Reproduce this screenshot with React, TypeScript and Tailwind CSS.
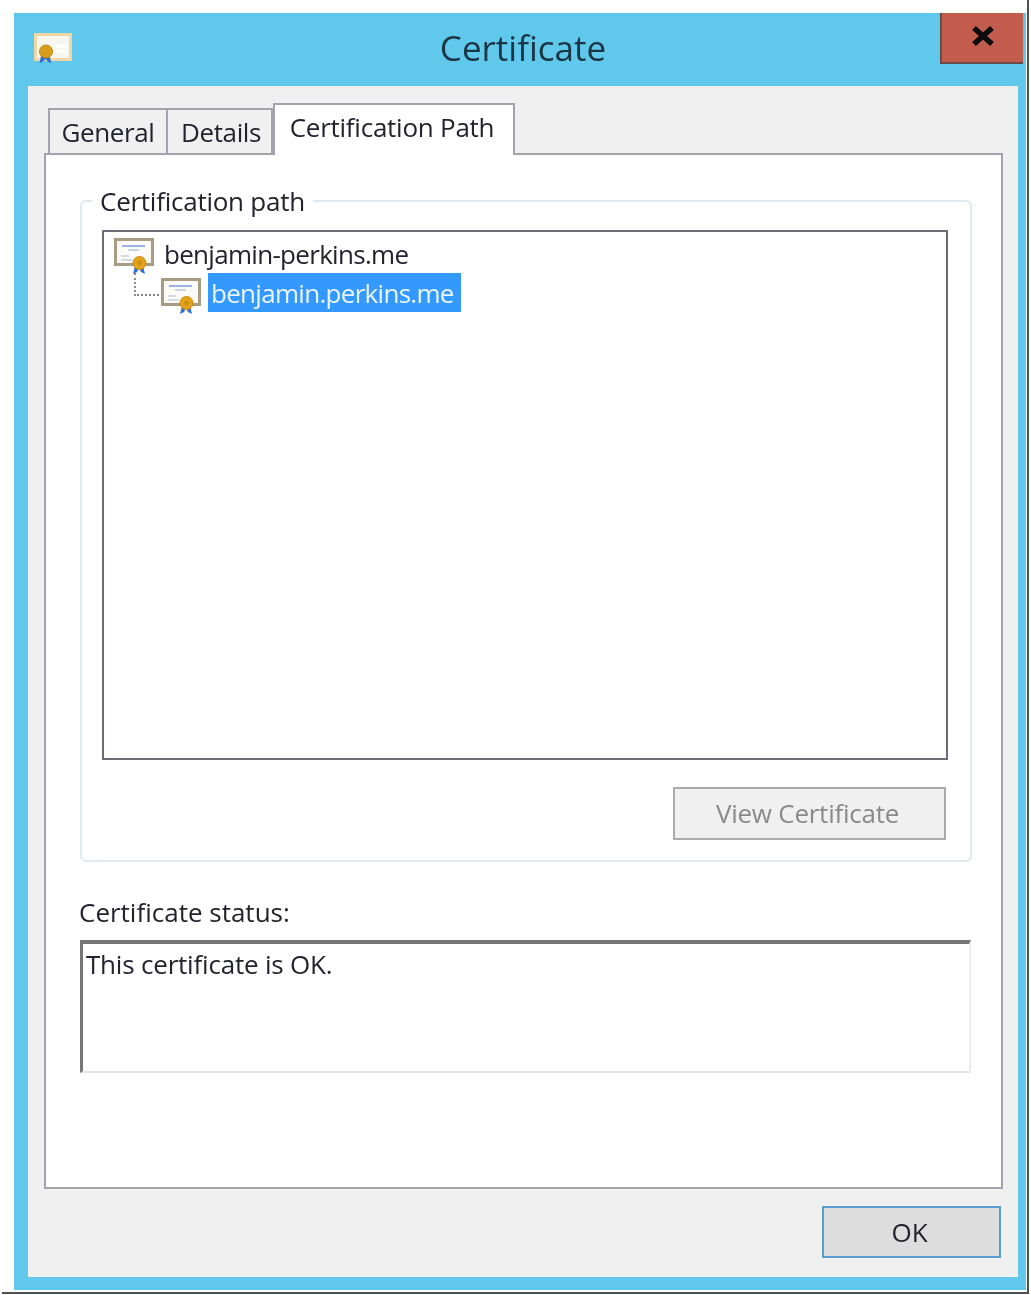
import React from "react";

const font = "font-['Open_Sans',sans-serif]";

const CertIcon: React.FC = () => (
    <svg width="42" height="38" viewBox="0 0 42 38" className="shrink-0">
        <rect x="1.5" y="1.5" width="37" height="25" fill="#fbfaf6" stroke="#a89c84" strokeWidth="3" />
        <path d="M8 8h23" stroke="#9db2e0" strokeWidth="2" />
        <path d="M14 12h11" stroke="#b9c6e0" strokeWidth="1.5" />
        <path d="M7 18h8M7 22h11" stroke="#c6cfe2" strokeWidth="1.5" />
        <path d="M21 28l-2 8 4-2 2-4 2 4 4 2-2-8z" fill="#2f6fd8" />
        <circle cx="25.5" cy="25" r="6.5" fill="#e3a41c" stroke="#c98a10" />
        <circle cx="25.5" cy="25" r="2.5" fill="#cf9214" />
    </svg>
);

const TitleIcon: React.FC = () => (
    <svg width="40" height="32" viewBox="0 0 40 32" className="shrink-0">
        <rect x="1.5" y="1.5" width="35" height="25" fill="#f6f6ef" stroke="#f3d6a6" strokeWidth="3" />
        <path d="M22 13h11M22 18h11" stroke="#ffffff" strokeWidth="3" />
        <path d="M7 23l-1.5 7 3-1 3-3 3 3 3 1-2-7z" fill="#2f6fd8" />
        <circle cx="12" cy="18.5" r="6.5" fill="#d89c1a" stroke="#b98810" />
    </svg>
);

const App: React.FC = () => {
    return (
        <div className={`${font} ml-[2px] h-[1294px] w-[1027px] overflow-hidden border-r-2 border-b-2 border-[#505050] bg-white pt-[13px] pl-[12px] text-[#23232e] blur-[0.7px]`}>
            <div className="relative flex h-[1277px] w-[1012px] flex-col bg-[#5fc8eb] pr-[8px] pb-[13px] pl-[14px]">
                {/* title bar */}
                <div className="flex h-[73px] shrink-0 items-center justify-center">
                    <div className="absolute top-[20px] left-[20px]">
                        <TitleIcon />
                    </div>
                    <span className="mb-[4px] text-[35px] leading-none text-[#1c3545]">Certificate</span>
                    <div className="absolute top-0 right-[3px] flex h-[51px] w-[83px] items-center justify-center border-b-2 border-l-2 border-[#6b4a48] bg-[#c25c4d] pb-[3px]">
                        <svg width="24" height="22" viewBox="0 0 24 22">
                            <path d="M3 3l18 16M21 3L3 19" stroke="#0c0c0c" strokeWidth="5.5" />
                        </svg>
                    </div>
                </div>

                {/* dialog body */}
                <div className="flex min-h-0 flex-1 flex-col bg-[#f0f0f0] pt-[17px] pr-[15px] pb-[19px] pl-[16px]">
                    <div className="relative z-10 -mb-[2px] flex h-[52px] shrink-0 items-end pl-[4px]">
                        <div className="flex h-[47px] w-[120px] items-center justify-center border-2 border-[#a3a3ad] bg-[#f0f0f0] text-[26px] leading-none tracking-[-0.4px]">
                            General
                        </div>
                        <div className="flex h-[47px] w-[105px] items-center justify-center border-t-2 border-r-2 border-b-2 border-[#a3a3ad] bg-[#f0f0f0] pl-[3px] text-[26px] leading-none tracking-[-0.4px]">
                            Details
                        </div>
                        <div className="flex h-[52px] w-[242px] items-center justify-center border-x-2 border-t-2 border-[#a3a3ad] bg-white pr-[4px] pb-[7px] text-[26px] leading-none tracking-[-0.25px]">
                            Certification Path
                        </div>
                    </div>

                    <div className="flex min-h-0 flex-1 flex-col border-2 border-[#a3a3ad] bg-white px-[34px] pt-[45px]">
                        {/* certification path group */}
                        <div className="relative flex h-[662px] w-[892px] shrink-0 flex-col items-end rounded-[6px] border-2 border-[#dfe9f0] pt-[28px] pr-[22px] pb-[20px] pl-[20px]">
                            <span className="absolute -top-[15px] left-[10px] bg-white px-[8px] text-[26px] leading-[28px] tracking-[-0.25px]">
                                Certification path
                            </span>
                            <div className="flex h-[530px] w-[846px] shrink-0 flex-col border-2 border-[#6e6e78] bg-white pt-[5px] pl-[10px]">
                                <div className="flex h-[36px] shrink-0 items-center gap-[8px]">
                                    <div className="mt-[4px]">
                                        <CertIcon />
                                    </div>
                                    <span className="pb-[2px] text-[26px] leading-none tracking-[-0.7px]">benjamin-perkins.me</span>
                                </div>
                                <div className="relative flex h-[40px] shrink-0 items-start pl-[47px]">
                                    <div className="absolute top-[0px] left-[20px] h-[23px] w-[25px] border-b-2 border-l-2 border-dotted border-[#8a8a8a]" />
                                    <div className="mt-[5px]">
                                        <CertIcon />
                                    </div>
                                    <span className="ml-[5px] flex h-[39px] w-[253px] items-center bg-[#3399ff] pl-[3px] text-[26px] leading-none tracking-[-0.7px] text-[#eaf4ff]">
                                        benjamin.perkins.me
                                    </span>
                                </div>
                            </div>
                            <button className="mt-[27px] mr-[2px] flex h-[54px] w-[273px] items-center justify-center border-2 border-[#ababab] bg-[#f0f0f0] pr-[4px] pb-[2px] text-[26px] leading-none tracking-[-0.25px] text-[#8a8a8a]">
                                View Certificate
                            </button>
                        </div>

                        {/* status */}
                        <div className="mt-[34px] -ml-[1px] h-[32px] text-[26px] leading-[32px]">Certificate status:</div>
                        <div className="mt-[12px] h-[133px] w-[891px] border-t-4 border-r-2 border-b-2 border-l-[3px] border-t-[#777] border-r-[#ececec] border-b-[#e4e4e4] border-l-[#777] pt-[4px] pl-[3px] text-[26px] leading-[32px] tracking-[-0.2px]">
                            This certificate is OK.
                        </div>
                    </div>

                    {/* footer */}
                    <div className="flex h-[69px] shrink-0 items-end justify-end pr-[2px]">
                        <button className="flex h-[52px] w-[179px] items-center justify-center border-2 border-[#5a9ccb] bg-[#dddddd] pr-[4px] text-[26px] leading-none">
                            OK
                        </button>
                    </div>
                </div>
            </div>
        </div>
    );
};

export default App;
